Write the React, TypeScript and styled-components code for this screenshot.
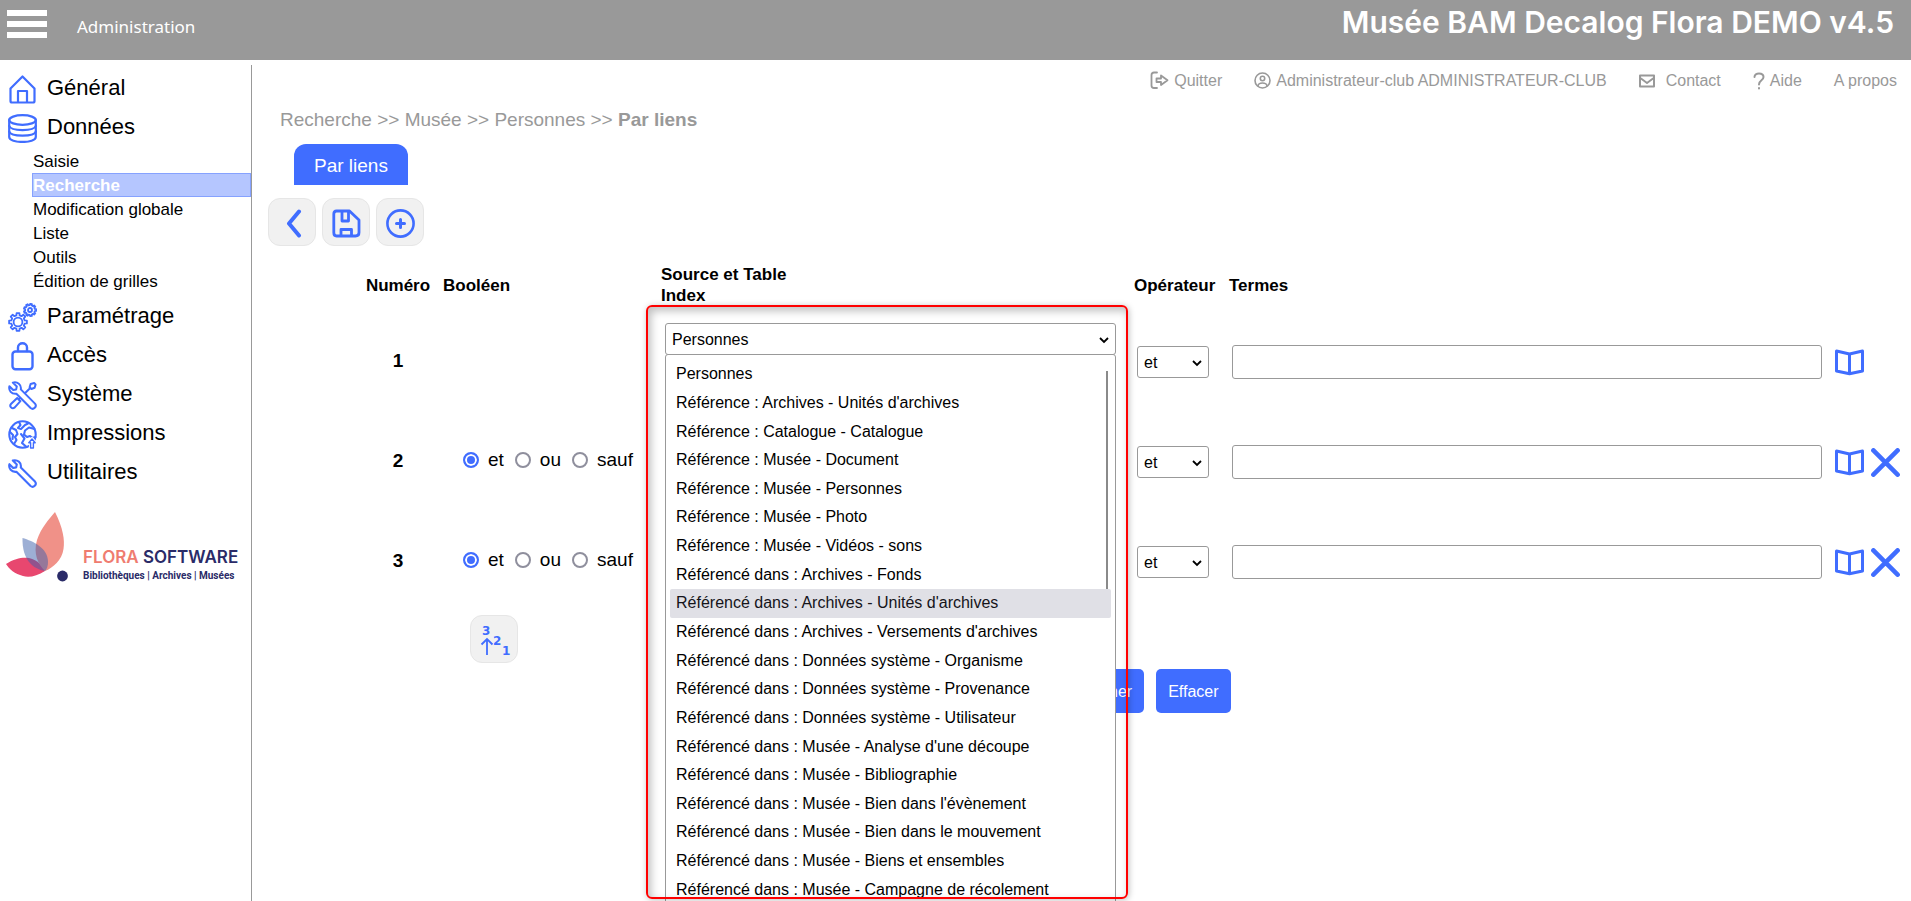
import React from "react";
import styled, { createGlobalStyle } from "styled-components";

const BLUE = "#406dff";
const GREY = "#999999";

const GlobalStyle = createGlobalStyle`
  *, *::before, *::after { box-sizing: border-box; }
  body {
    margin: 0;
    background: #ffffff;
    color: #000000;
    font-family: "Liberation Sans", Arial, sans-serif;
    font-size: 16px;
  }
  button, input, select { font-family: inherit; }
  a { color: inherit; text-decoration: none; }
`;

/* ---------- page frame ---------- */

const Page = styled.div`
  display: flex;
  flex-direction: column;
  height: 100vh;
  overflow: hidden;
`;

const Header = styled.header`
  display: flex;
  flex: none;
  justify-content: space-between;
  height: 60px;
  padding: 0 17px 0 7px;
  background: ${GREY};
  color: #ffffff;
`;

const HeaderLeft = styled.div`
  display: flex;
  align-items: center;
  gap: 30px;
  height: 48px;
`;

const MenuButton = styled.button`
  display: flex;
  padding: 0;
  border: 0;
  background: none;
  cursor: pointer;
`;

const HeaderLabel = styled.span`
  padding-top: 4px;
  font-family: "Noto Sans", "Open Sans", sans-serif;
  font-size: 17px;
`;

const SiteTitle = styled.h1`
  margin: 0;
  font-family: Inter, "Open Sans", sans-serif;
  font-size: 30px;
  font-weight: 600;
  line-height: 44px;
  white-space: nowrap;
`;

const Body = styled.div`
  display: flex;
  flex: 1;
  min-height: 0;
`;

/* ---------- sidebar ---------- */

const Sidebar = styled.nav`
  flex: none;
  width: 252px;
  margin-top: 5px;
  padding-top: 5px;
  border-right: 1px solid ${GREY};
`;

const MenuList = styled.ul`
  margin: 0;
  padding: 0;
  list-style: none;
`;

const MenuLink = styled.a`
  display: flex;
  align-items: center;
  gap: 10px;
  height: 39px;
  padding-left: 8px;
  font-size: 22px;
  line-height: 36px;

  svg { flex: none; }
  span { padding-bottom: 3px; }
`;

const SubList = styled.ul`
  margin: 0;
  padding: 1px 0 5px 32px;
  list-style: none;
`;

const SubLink = styled.a<{ $active?: boolean }>`
  display: block;
  height: 24px;
  border: 1px solid ${(p) => (p.$active ? "#86a2ff" : "transparent")};
  background: ${(p) => (p.$active ? "#b5c6ff" : "transparent")};
  color: ${(p) => (p.$active ? "#ffffff" : "#000000")};
  font-size: 17px;
  font-weight: ${(p) => (p.$active ? 700 : 400)};
  line-height: 23px;
`;

const Logo = styled.div`
  display: flex;
  align-items: flex-end;
  gap: 14px;
  margin-top: 17px;
  padding-left: 5px;
`;

const LogoText = styled.div`
  color: #2a2b68;
  font-family: Inter, "Open Sans", sans-serif;
  white-space: nowrap;
`;

const LogoName = styled.div`
  font-size: 17px;
  font-weight: 600;
  line-height: 22px;

  span { color: #ef7c70; }
`;

const LogoTagline = styled.div`
  font-family: Roboto, "Open Sans", sans-serif;
  font-size: 10px;
  font-weight: 700;
  line-height: 16px;
`;

/* ---------- main column ---------- */

const Main = styled.main`
  flex: 1;
  min-width: 0;
`;

const TopNav = styled.nav`
  display: flex;
  align-items: center;
  justify-content: flex-end;
  gap: 32px;
  height: 41px;
  padding-right: 14px;
  color: ${GREY};
  font-size: 16px;
`;

const TopLink = styled.a<{ $gap?: number }>`
  display: flex;
  align-items: center;
  gap: ${(p) => p.$gap ?? 5}px;
  white-space: nowrap;
`;

const Breadcrumb = styled.div`
  padding-left: 28px;
  color: ${GREY};
  font-size: 19px;
  line-height: 38px;
`;

const Tab = styled.button`
  display: block;
  height: 41px;
  margin: 5px 0 0 42px;
  padding: 2px 20px 0;
  border: 0;
  border-radius: 12px 12px 0 0;
  background: ${BLUE};
  color: #ffffff;
  font-size: 19px;
`;

const Toolbar = styled.div`
  display: flex;
  gap: 6px;
  margin: 13px 0 18px 16px;
`;

const IconButton = styled.button`
  display: flex;
  align-items: center;
  justify-content: center;
  width: 48px;
  height: 48px;
  padding: 2px 0 0;
  border: 1px solid #e6e6e6;
  border-radius: 12px;
  background: #f1f1f1;
  cursor: pointer;
`;

/* ---------- search form ---------- */

const Form = styled.form`
  margin-left: 105px;
`;

const Criteria = styled.table`
  width: 100%;
  border-collapse: collapse;
  table-layout: fixed;
`;

const HeadCell = styled.th<{ $width?: number; $center?: boolean }>`
  width: ${(p) => (p.$width ? `${p.$width}px` : "auto")};
  height: 47px;
  padding: 0 0 5px ${(p) => (p.$center ? 0 : 4)}px;
  font-size: 17px;
  line-height: 21px;
  text-align: ${(p) => (p.$center ? "center" : "left")};
`;

const NumberCell = styled.td`
  height: 100px;
  padding: 0;
  font-size: 19px;
  font-weight: 700;
  text-align: center;
`;

const Cell = styled.td<{ $left?: number }>`
  padding: 2px 7px 0 ${(p) => p.$left ?? 7}px;
`;

const SourceCell = styled.td`
  padding: 12px 14px 0 8px;
  vertical-align: top;
`;

const Radios = styled.div`
  display: flex;
  gap: 11px;
  padding-bottom: 4px;
`;

const RadioLabel = styled.label`
  display: flex;
  align-items: center;
  gap: 9px;
  font-size: 19px;
  line-height: 22px;
`;

const Radio = styled.input`
  appearance: none;
  width: 16px;
  height: 16px;
  margin: 0;
  border: 2px solid #8f8f9d;
  border-radius: 50%;
  background: #ffffff;

  &:checked {
    border-color: ${BLUE};
    background: ${BLUE};
    box-shadow: inset 0 0 0 2px #ffffff;
  }
`;

const SelectBox = styled.div<{ $width?: number }>`
  position: relative;
  width: ${(p) => (p.$width ? `${p.$width}px` : "100%")};
`;

const Select = styled.select`
  display: block;
  appearance: none;
  width: 100%;
  height: 32px;
  padding: 0 24px 0 6px;
  border: 1px solid ${GREY};
  border-radius: 3px;
  background: #ffffff;
  color: #000000;
  font-size: 16px;
`;

const Caret = styled.svg`
  position: absolute;
  top: 14px;
  right: 7px;
  pointer-events: none;
`;

const Dropdown = styled.ul`
  position: absolute;
  z-index: 2;
  top: 31px;
  left: 0;
  right: 0;
  display: grid;
  grid-auto-rows: 1fr;
  height: 560px;
  margin: 0;
  padding: 5px 4px 9px;
  border: 1px solid ${GREY};
  border-radius: 3px;
  background: #ffffff;
  list-style: none;
`;

const Option = styled.li<{ $hover?: boolean }>`
  display: flex;
  align-items: center;
  padding-left: 6px;
  border-radius: 2px;
  background: ${(p) => (p.$hover ? "#e0e0e6" : "transparent")};
  color: ${(p) => (p.$hover ? "#15141a" : "#000000")};
  font-size: 16px;
  white-space: nowrap;
`;

const ScrollThumb = styled.div`
  position: absolute;
  z-index: 3;
  top: 48px;
  right: 8px;
  width: 2px;
  height: 218px;
  background: #8a8a8a;
`;

const Highlight = styled.div`
  position: absolute;
  z-index: 4;
  top: -18px;
  left: -19px;
  right: -12px;
  height: 594px;
  border: 2px solid #ff0000;
  border-radius: 6px;
  box-shadow: 1px 1px 6px rgba(0, 0, 0, 0.25), inset 3px 4px 8px rgba(0, 0, 0, 0.25);
  pointer-events: none;
`;

const TermInput = styled.input`
  display: block;
  width: 100%;
  height: 34px;
  padding: 0 8px;
  border: 1px solid ${GREY};
  border-radius: 3px;
  font-size: 16px;
`;

const RowActions = styled.div`
  display: flex;
  gap: 7px;
`;

const PlainButton = styled.button`
  display: flex;
  padding: 0;
  border: 0;
  background: none;
  cursor: pointer;
`;

const SortBar = styled.div`
  padding: 4px 0 6px 113px;
`;

const FormActions = styled.div`
  display: flex;
  justify-content: center;
  gap: 12px;
`;

const ActionButton = styled.button`
  height: 44px;
  padding: 2px 12px 0;
  border: 0;
  border-radius: 5px;
  background: ${BLUE};
  color: #ffffff;
  font-size: 16px;
  cursor: pointer;
`;

/* ---------- icons ---------- */

type IconProps = {
  children: React.ReactNode;
  size?: number;
  width?: number;
  stroke?: number;
  color?: string;
};

const Icon = ({ children, size = 29, width = size, stroke = 2, color = BLUE }: IconProps) => (
  <svg
    width={width}
    height={size}
    viewBox={`0 0 ${width} ${size}`}
    fill="none"
    stroke={color}
    strokeWidth={stroke}
    strokeLinecap="round"
    strokeLinejoin="round"
    aria-hidden="true"
  >
    {children}
  </svg>
);

const gearPath = (cx: number, cy: number, outer: number, inner: number, teeth: number) => {
  const points: string[] = [];
  for (let i = 0; i < teeth; i += 1) {
    const base = (i / teeth) * Math.PI * 2;
    const step = (Math.PI * 2) / teeth;
    [
      [inner, -0.3],
      [outer, -0.2],
      [outer, 0.2],
      [inner, 0.3],
    ].forEach(([r, t]) => {
      const a = base + t * step;
      points.push(`${(cx + r * Math.cos(a)).toFixed(2)} ${(cy + r * Math.sin(a)).toFixed(2)}`);
    });
  }
  return `M${points.join("L")}Z`;
};

const WRENCH =
  "M4.8 1.6L8.8 5.4L8.2 8.4L5.2 9L1.4 5.2C.4 9.4 3.4 13.4 8.4 12.8L22.6 27C25.4 29.4 29.4 25.6 27 22.6L12.8 8.4C13.6 3.4 9.4 .4 4.8 1.6Z";

const HomeIcon = () => (
  <Icon stroke={2.2}>
    <path d="M2.5 13.5L14.5 1.5L26.5 13.5V26Q26.5 27.5 25 27.5H4Q2.5 27.5 2.5 26Z" />
    <path d="M10 27V16H19V27" />
  </Icon>
);

const DatabaseIcon = () => (
  <Icon stroke={2.2}>
    <ellipse cx="14.5" cy="6" rx="13.3" ry="4.8" />
    <path d="M1.2 6V23C1.2 29.6 27.8 29.6 27.8 23V6" />
    <path d="M1.2 12C3 17.4 26 17.4 27.8 12M1.2 17.6C3 23 26 23 27.8 17.6" />
  </Icon>
);

const GearsIcon = () => (
  <Icon stroke={1.8}>
    <path d={gearPath(10, 19, 9, 6.8, 8)} />
    <circle cx="10" cy="19" r="4.4" />
    <path d={gearPath(22, 7, 6.2, 4.9, 9)} />
    <circle cx="22" cy="7" r="2" />
  </Icon>
);

const LockIcon = () => (
  <Icon stroke={2.4}>
    <rect x="4.5" y="9.5" width="20" height="17.8" rx="3" />
    <path d="M10 9V5.5C10 -.2 19 -.2 19 5.5V9" />
  </Icon>
);

const ToolsIcon = () => (
  <Icon stroke={2}>
    <path d="M26.2 2L22.6 3L21.6 6.2L23.4 8L26.6 6.8L27.6 3.4Z" />
    <path d="M22 7.2L9.5 19.5" />
    <path d="M9.2 17L12.4 20.2L6.8 26.4C4 28.6 .8 25.2 3.2 22.8Z" fill="#fff" />
    <path d={WRENCH} fill="#fff" />
  </Icon>
);

const GlobeIcon = () => (
  <Icon stroke={2.1}>
    <circle cx="14.5" cy="14.5" r="13.2" />
    <path d="M4 8L8 10L9.5 14L7 17L8.5 20L6 24M2 12L5 15L4.5 19" />
    <path d="M11 2L12.5 5L10 8L13 9L17 5L20 3.5M26.5 9L21 7.5L17 10.5L16 14.5L19 17L22 16L24.5 18L27.5 17M13 14L16.5 18.5L14 23L18 26.5" />
    <path d="M24 18.5L20.5 23H22.4V28H25.6V23H27.5Z" fill="#fff" stroke="#fff" strokeWidth="3" />
    <path d="M24 19L20.8 22.8H22.6V28H25.4V22.8H27.2Z" strokeWidth="1.4" />
  </Icon>
);

const WrenchIcon = () => (
  <Icon stroke={2.1}>
    <path d={WRENCH} />
  </Icon>
);

const BackIcon = () => (
  <Icon stroke={4}>
    <path d="M21 2.5L11 14.5L21 26.5" />
  </Icon>
);

const SaveIcon = () => (
  <Icon stroke={2.8}>
    <path d="M4.5 2H17.5L27 11V23.5Q27 27 23.5 27H4.5Q1.8 27 1.8 23.5V5Q1.8 2 4.5 2Z" />
    <path d="M10 3V12H16.5V3M9 26V20.5H19.5V26" />
  </Icon>
);

const AddIcon = () => (
  <Icon stroke={2.6}>
    <circle cx="14.5" cy="14.5" r="13.1" />
    <path d="M14.5 10.5V18.5M10.5 14.5H18.5" strokeWidth="3" />
  </Icon>
);

const BookIcon = () => (
  <Icon stroke={3}>
    <path d="M1.5 3L14.5 6L27.5 3V23L14.5 25.8L1.5 23ZM14.5 6V25" />
  </Icon>
);

const CrossIcon = () => (
  <Icon stroke={4.6}>
    <path d="M2.4 2.4L26.6 26.6M26.6 2.4L2.4 26.6" />
  </Icon>
);

const SortIcon = () => (
  <svg width="34" height="34" viewBox="0 0 34 34" aria-hidden="true">
    <g fill={BLUE} fontFamily="DejaVu Sans" fontWeight="700" fontSize="12">
      <text x="5" y="12">3</text>
      <text x="16" y="22">2</text>
      <text x="25" y="32">1</text>
    </g>
    <path d="M10 32V16M4.5 21.5L10 16L15.5 21.5" fill="none" stroke={BLUE} strokeWidth="1.8" />
  </svg>
);

const BurgerIcon = () => (
  <svg width="40" height="28" viewBox="0 0 40 28" fill="#ffffff" aria-hidden="true">
    <path d="M0 0H40V6H0ZM0 11H40V17H0ZM0 22H40V28H0Z" />
  </svg>
);

const QuitIcon = () => (
  <Icon size={19} stroke={1.8} color={GREY}>
    <path d="M7 1.5H4Q1.5 1.5 1.5 4V14.5Q1.5 17 4 17H7" />
    <path d="M6.5 7.5H11V4.5L17.5 9.3L11 14V11H6.5Z" />
  </Icon>
);

const UserIcon = () => (
  <Icon size={17} stroke={1.6} color={GREY}>
    <circle cx="8.5" cy="8.5" r="7.5" />
    <circle cx="8.5" cy="6.5" r="2.2" />
    <path d="M4 14C4.5 10 12.5 10 13 14" />
  </Icon>
);

const MailIcon = () => (
  <Icon size={16} stroke={2} color={GREY}>
    <rect x="1" y="2.5" width="14" height="11" />
    <path d="M2 5.5L8 10L14 5.5" />
  </Icon>
);

const HelpIcon = () => (
  <Icon size={18} width={12} stroke={2} color={GREY}>
    <path d="M1.5 5C1.5 .2 10.5 .2 10.5 5C10.5 8.5 6 8 6 12.5M6 16V16.5" />
  </Icon>
);

const SelectCaret = () => (
  <Caret width="10" height="7" viewBox="0 0 10 7" fill="none" stroke="#000" strokeWidth="1.8" aria-hidden="true">
    <path d="M1 1L5 5L9 1" />
  </Caret>
);

const FloraMark = () => (
  <svg width="64" height="74" viewBox="0 0 64 74" aria-hidden="true">
    <path d="M1 54C10 48 18 47 24 48C33 50 38 56 40 61C32 66 24 68 18 66C10 64 4 59 1 54Z" fill="#e8476f" />
    <path d="M50 2C58 18 60 30 58.5 39C57 50 48 58 40 61C33 54 28 44 32 30C36 18 44 9 50 2Z" fill="#f09188" />
    <path d="M17.5 28C28 31 43 38 43 52C43 56 42 59 40 61C28 59 17 50 17.5 28Z" fill="#3c60ab" opacity="0.5" />
    <circle cx="57.5" cy="66" r="5.4" fill="#2a2b68" />
  </svg>
);

/* ---------- data ---------- */

type MenuEntry = { label: string; icon: React.ReactNode; children?: string[] };

const MENU: MenuEntry[] = [
  { label: "Général", icon: <HomeIcon /> },
  {
    label: "Données",
    icon: <DatabaseIcon />,
    children: ["Saisie", "Recherche", "Modification globale", "Liste", "Outils", "Édition de grilles"],
  },
  { label: "Paramétrage", icon: <GearsIcon /> },
  { label: "Accès", icon: <LockIcon /> },
  { label: "Système", icon: <ToolsIcon /> },
  { label: "Impressions", icon: <GlobeIcon /> },
  { label: "Utilitaires", icon: <WrenchIcon /> },
];

const SOURCES = [
  "Personnes",
  "Référence : Archives - Unités d'archives",
  "Référence : Catalogue - Catalogue",
  "Référence : Musée - Document",
  "Référence : Musée - Personnes",
  "Référence : Musée - Photo",
  "Référence : Musée - Vidéos - sons",
  "Référencé dans : Archives - Fonds",
  "Référencé dans : Archives - Unités d'archives",
  "Référencé dans : Archives - Versements d'archives",
  "Référencé dans : Données système - Organisme",
  "Référencé dans : Données système - Provenance",
  "Référencé dans : Données système - Utilisateur",
  "Référencé dans : Musée - Analyse d'une découpe",
  "Référencé dans : Musée - Bibliographie",
  "Référencé dans : Musée - Bien dans l'évènement",
  "Référencé dans : Musée - Bien dans le mouvement",
  "Référencé dans : Musée - Biens et ensembles",
  "Référencé dans : Musée - Campagne de récolement",
];

const HOVERED = 8;

/* ---------- parts ---------- */

const SourceSelect = () => (
  <SelectBox>
    <Select aria-label="Source et Table" defaultValue="Personnes">
      <option>Personnes</option>
    </Select>
    <SelectCaret />
    <Dropdown role="listbox" aria-label="Source et Table">
      {SOURCES.map((source, i) => (
        <Option key={source} role="option" aria-selected={i === 0} $hover={i === HOVERED}>
          {source}
        </Option>
      ))}
    </Dropdown>
    <ScrollThumb />
    <Highlight />
  </SelectBox>
);

const CriteriaRow = ({ n }: { n: number }) => (
  <tr>
    <NumberCell>{n}</NumberCell>
    <Cell $left={24}>
      {n > 1 && (
        <Radios>
          {["et", "ou", "sauf"].map((op) => (
            <RadioLabel key={op}>
              <Radio type="radio" name={`bool-${n}`} value={op} defaultChecked={op === "et"} />
              {op}
            </RadioLabel>
          ))}
        </Radios>
      )}
    </Cell>
    <SourceCell>{n === 1 && <SourceSelect />}</SourceCell>
    <Cell>
      <SelectBox $width={72}>
        <Select aria-label={`Opérateur ${n}`} defaultValue="et">
          <option>et</option>
        </Select>
        <SelectCaret />
      </SelectBox>
    </Cell>
    <Cell>
      <TermInput type="text" aria-label={`Termes ${n}`} />
    </Cell>
    <Cell $left={6}>
      <RowActions>
        <PlainButton type="button" aria-label="Index">
          <BookIcon />
        </PlainButton>
        {n > 1 && (
          <PlainButton type="button" aria-label="Supprimer">
            <CrossIcon />
          </PlainButton>
        )}
      </RowActions>
    </Cell>
  </tr>
);

export default function App() {
  return (
    <Page>
      <GlobalStyle />
      <Header>
        <HeaderLeft>
          <MenuButton type="button" aria-label="Menu">
            <BurgerIcon />
          </MenuButton>
          <HeaderLabel>Administration</HeaderLabel>
        </HeaderLeft>
        <SiteTitle>Musée BAM Decalog Flora DEMO v4.5</SiteTitle>
      </Header>
      <Body>
        <Sidebar>
          <MenuList>
            {MENU.map(({ label, icon, children }) => (
              <li key={label}>
                <MenuLink href="#">
                  {icon}
                  <span>{label}</span>
                </MenuLink>
                {children && (
                  <SubList>
                    {children.map((child) => (
                      <li key={child}>
                        <SubLink href="#" $active={child === "Recherche"}>
                          {child}
                        </SubLink>
                      </li>
                    ))}
                  </SubList>
                )}
              </li>
            ))}
          </MenuList>
          <Logo>
            <FloraMark />
            <LogoText>
              <LogoName>
                <span>FLORA</span> SOFTWARE
              </LogoName>
              <LogoTagline>Bibliothèques | Archives | Musées</LogoTagline>
            </LogoText>
          </Logo>
        </Sidebar>
        <Main>
          <TopNav>
            <TopLink href="#">
              <QuitIcon />
              Quitter
            </TopLink>
            <TopLink href="#">
              <UserIcon />
              Administrateur-club ADMINISTRATEUR-CLUB
            </TopLink>
            <TopLink href="#" $gap={11}>
              <MailIcon />
              Contact
            </TopLink>
            <TopLink href="#">
              <HelpIcon />
              Aide
            </TopLink>
            <TopLink href="#">A propos</TopLink>
          </TopNav>
          <Breadcrumb>
            Recherche &gt;&gt; Musée &gt;&gt; Personnes &gt;&gt; <strong>Par liens</strong>
          </Breadcrumb>
          <Tab type="button">Par liens</Tab>
          <Toolbar>
            <IconButton type="button" aria-label="Retour">
              <BackIcon />
            </IconButton>
            <IconButton type="button" aria-label="Enregistrer">
              <SaveIcon />
            </IconButton>
            <IconButton type="button" aria-label="Ajouter">
              <AddIcon />
            </IconButton>
          </Toolbar>
          <Form>
            <Criteria>
              <thead>
                <tr>
                  <HeadCell $width={82} $center>
                    Numéro
                  </HeadCell>
                  <HeadCell $width={218}>Booléen</HeadCell>
                  <HeadCell $width={473}>
                    Source et Table
                    <br />
                    Index
                  </HeadCell>
                  <HeadCell $width={95}>Opérateur</HeadCell>
                  <HeadCell>Termes</HeadCell>
                  <HeadCell $width={82} />
                </tr>
              </thead>
              <tbody>
                {[1, 2, 3].map((n) => (
                  <CriteriaRow key={n} n={n} />
                ))}
              </tbody>
            </Criteria>
            <SortBar>
              <IconButton type="button" aria-label="Trier">
                <SortIcon />
              </IconButton>
            </SortBar>
            <FormActions>
              <ActionButton type="button">Rechercher</ActionButton>
              <ActionButton type="reset">Effacer</ActionButton>
            </FormActions>
          </Form>
        </Main>
      </Body>
    </Page>
  );
}
